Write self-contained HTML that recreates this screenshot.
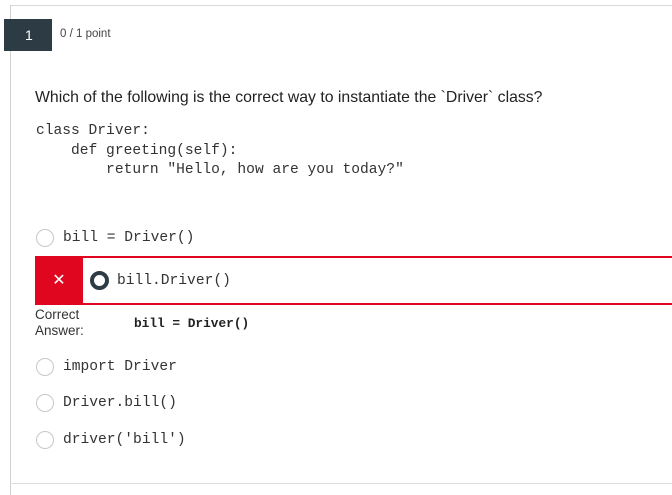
<!DOCTYPE html>
<html><head><meta charset="utf-8"><style>
body{margin:0;width:672px;height:492px;background:#fff;position:relative;overflow:hidden;font-family:"Liberation Sans",sans-serif;color:#1f1f1f}
.a{position:absolute;white-space:pre}
.m{font-family:"Liberation Mono",monospace;font-size:14.6px;color:#333}
.r{position:absolute;width:16px;height:16px;border:1px solid #c8c8c8;border-radius:50%;background:#fff}
</style></head><body>
<div class="a" style="left:10px;top:5px;width:680px;height:1px;background:#d9d9d9"></div>
<div class="a" style="left:10px;top:5px;width:1px;height:490px;background:#d0d0d0"></div>
<div class="a" style="left:10px;top:483px;width:680px;height:1px;background:#ddd"></div>
<div class="a" style="left:4px;top:19px;width:48px;height:32px;background:#2d3b45;color:#fff;font-size:14px;line-height:32px;text-indent:21px">1</div>
<div class="a" style="left:60px;top:28px;font-size:11.5px;color:#444">0 / 1 point</div>
<div class="a" style="left:35px;top:89px;font-size:15.8px;color:#222">Which of the following is the correct way to instantiate the `Driver` class?</div>
<div class="a m" style="left:36px;top:122px;line-height:19.5px">class Driver:
    def greeting(self):
        return "Hello, how are you today?"</div>
<div class="r" style="left:36px;top:229px"></div>
<div class="a m" style="left:63px;top:230px">bill = Driver()</div>
<div class="a" style="left:35px;top:256px;width:660px;height:45px;border:2px solid #e0061f;border-radius:3px"></div>
<div class="a" style="left:35px;top:256px;width:48px;height:49px;background:#e0061f;color:#fff;font-size:16px;line-height:49px;text-align:center">✕</div>
<div class="a" style="left:90px;top:271px;width:11px;height:11px;border:4px solid #2d3b45;border-radius:50%"></div>
<div class="a m" style="left:117px;top:273px">bill.Driver()</div>
<div class="a" style="left:35px;top:307px;font-size:13.5px;line-height:16px;color:#333">Correct
Answer:</div>
<div class="a m" style="left:134px;top:316px;font-weight:bold;font-size:12.8px;color:#222">bill = Driver()</div>
<div class="r" style="left:36px;top:358px"></div>
<div class="a m" style="left:63px;top:359px">import Driver</div>
<div class="r" style="left:36px;top:394px"></div>
<div class="a m" style="left:63px;top:395px">Driver.bill()</div>
<div class="r" style="left:36px;top:431px"></div>
<div class="a m" style="left:63px;top:432px">driver('bill')</div>
</body></html>
